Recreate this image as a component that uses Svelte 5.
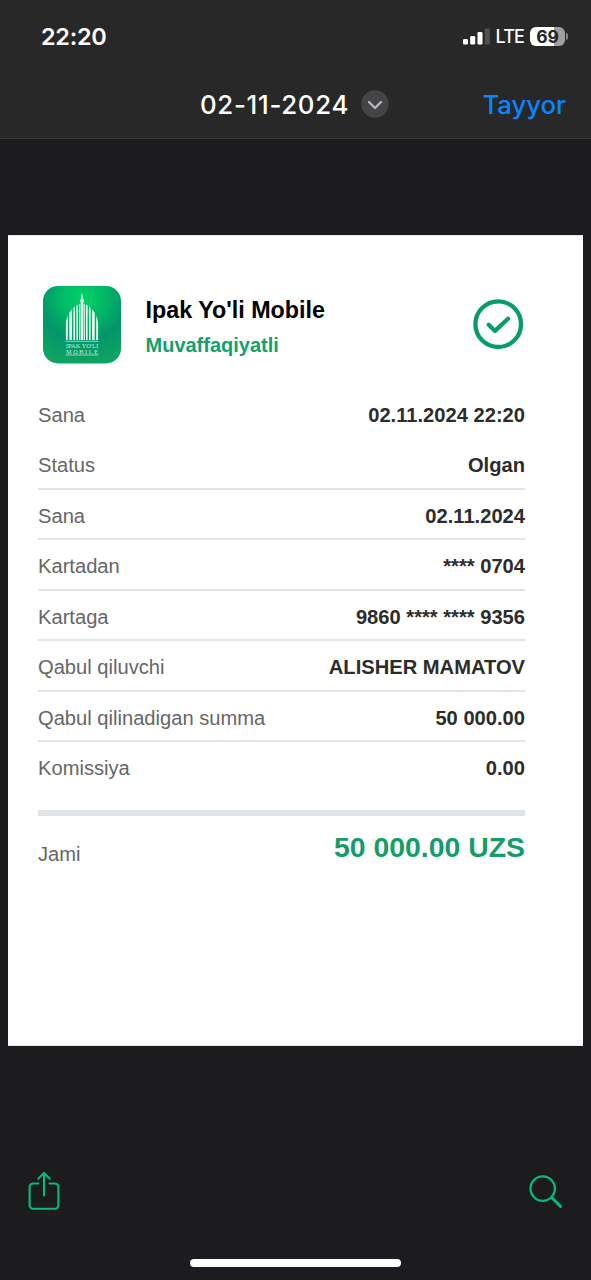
<script>
  const rows = [
    ['Sana', '02.11.2024 22:20', false],
    ['Status', 'Olgan', true],
    ['Sana', '02.11.2024', true],
    ['Kartadan', '**** 0704', true],
    ['Kartaga', '9860 **** **** 9356', true],
    ['Qabul qiluvchi', 'ALISHER MAMATOV', true],
    ['Qabul qilinadigan summa', '50 000.00', true],
    ['Komissiya', '0.00', false]
  ];
  const columns = [
    [66.8, 319, 2], [70.6, 311, 2.6], [74.2, 307, 1.6], [77.2, 305, 1.6], [79.8, 304, 1.2],
    [84.2, 304, 1.2], [86.8, 305, 1.6], [89.8, 307, 1.6], [93.4, 311, 2.6], [97.2, 319, 2]
  ];
</script>

<div class="screen">
  <header>
    <div class="status">
      <span class="time">22:20</span>
      <div class="signals">
        <svg class="bars" width="27" height="18" viewBox="0 0 27 18">
          <rect x="0" y="12" width="5" height="5.5" rx="1.3" fill="#fff" />
          <rect x="7.2" y="9" width="5" height="8.500" rx="1.3" fill="#fff" />
          <rect x="14.5" y="5" width="5" height="12.500" rx="1.3" fill="#fff" />
          <rect x="21.8" y="1.500" width="5" height="16" rx="1.3" fill="#505052" />
        </svg>
        <span class="lte">LTE</span>
        <div class="battery"><span>69</span></div>
        <i class="cap"></i>
      </div>
    </div>
    <div class="titlebar">
      <span class="title">02-11-2024</span>
      <svg class="chev" width="28" height="28" viewBox="0 0 28 28">
        <circle cx="14" cy="14" r="13.7" fill="#454549" />
        <path d="M8 12l6 6 6-6" fill="none" stroke="#b9b9bd" stroke-width="2.3" stroke-linecap="round" stroke-linejoin="round" />
      </svg>
      <span class="done">Tayyor</span>
    </div>
  </header>

  <main>
    <div class="brand">
      <svg class="logo" width="78" height="78" viewBox="43 286 78 78">
        <defs>
          <radialGradient id="glow" gradientUnits="userSpaceOnUse" cx="83" cy="298" r="64">
            <stop offset="0" stop-color="#00d166" />
            <stop offset="0.3" stop-color="#02bd66" />
            <stop offset="0.67" stop-color="#03966b" />
            <stop offset="1" stop-color="#0ea263" />
          </radialGradient>
          <clipPath id="dome">
            <path d="M65.600 340V327c0-11 5.400-19 13.200-22.700L82 302.500l3.200 1.800C93 308 98.400 316 98.400 327v13z" />
          </clipPath>
        </defs>
        <rect x="43" y="286" width="78" height="77.5" rx="15" fill="url(#glow)" />
        <path d="M81.7 293.500h.6l.5 5.300 1.400 1.800-1.200 2.400v37h-2v-37l-1.200-2.400 1.400-1.800z" fill="#e9fff5" />
        <g clip-path="url(#dome)">
          {#each columns as [x, top, w]}
            <path d="M{x} 340V{top - 6}" stroke="#effff8" stroke-width={w} />
          {/each}
        </g>
        <path d="M65.500 341.300h33M65.500 355h33" stroke="#b9e9d2" stroke-width="0.8" />
        <text x="66" y="348" textLength="32" lengthAdjust="spacingAndGlyphs">IPAK YO'LI</text>
        <text x="66" y="353.8" textLength="32">MOBILE</text>
      </svg>
      <div class="names">
        <h1>Ipak Yo'li Mobile</h1>
        <p>Muvaffaqiyatli</p>
      </div>
      <svg class="check" width="52" height="52" viewBox="0 0 52 52" fill="none" stroke="#079d6b">
        <circle cx="26.2" cy="26.2" r="22.800" stroke-width="4.300" />
        <path d="M16.7 26.8l6.3 6.1L36 20.7" stroke-width="4.200" stroke-linecap="round" stroke-linejoin="round" />
      </svg>
    </div>

    <div class="rows">
      {#each rows as [label, value, ruled]}
        <div class="row" class:ruled>
          <span>{label}</span><b>{value}</b>
        </div>
      {/each}
    </div>
    <div class="total">
      <span>Jami</span><b>50 000.00 UZS</b>
    </div>
  </main>

  <footer>
    <div class="tools">
      <svg width="32" height="40" viewBox="0 0 32 40" fill="none" stroke="#0bb978" stroke-width="2.1" stroke-linecap="round" stroke-linejoin="round">
        <path d="M10.5 12.5H5.2a3.6 3.6 0 0 0-3.6 3.6v18a3.6 3.6 0 0 0 3.6 3.6h21.6a3.6 3.6 0 0 0 3.6-3.6v-18a3.6 3.6 0 0 0-3.6-3.6H21.500M16 24.500V2M10.200 7.700L16 1.900l5.800 5.800" />
      </svg>
      <svg class="search" width="34" height="34" viewBox="0 0 34 34" fill="none" stroke="#0bb978" stroke-linecap="round">
        <circle cx="13.700" cy="13.600" r="12.200" stroke-width="2.300" />
        <path d="M22.600 22.500L31.500 31.400" stroke-width="3" />
      </svg>
    </div>
    <div class="home"></div>
  </footer>
</div>

<style>
  :global(body) { background: #1c1c1e; }
  .screen {
    box-sizing: border-box; width: 591px; height: 1280px; overflow: hidden;
    display: flex; flex-direction: column; background: #1c1c1e;
    font-family: "Liberation Sans", Arial, sans-serif;
  }
  header {
    box-sizing: border-box; height: 139px; flex: none; background: #282828;
    border-bottom: 1px solid #38383a; font-family: Inter, sans-serif; color: #fff;
  }
  .status { height: 72px; display: flex; justify-content: space-between; align-items: center; padding: 0 23px 0 41px; }
  .time { font-size: 23.5px; font-weight: 600; letter-spacing: -0.3px; }
  .signals { display: flex; align-items: center; }
  .lte { font-size: 18px; font-weight: 500; margin-left: 6px; letter-spacing: -0.9px; line-height: 20px; padding-top: 1px; }
  .battery {
    width: 35px; height: 19px; margin-left: 6px; border-radius: 6px; text-align: center;
    background: linear-gradient(90deg, #fff 69%, #a0a0a0 69%); color: #262626;
    font-size: 17.500px; font-weight: 700; line-height: 19px;
  }
  .cap { width: 2px; height: 7px; margin-left: 1px; background: #858587; border-radius: 0 3px 3px 0; }
  .titlebar { height: 64px; display: flex; align-items: center; padding: 0 25px 0 200px; }
  .title { font-size: 25.800px; font-weight: 500; letter-spacing: 0.700px; white-space: nowrap; width: 161px; }
  .chev { flex: none; }
  .done { margin-left: auto; color: #0a84ff; font-size: 25.700px; font-weight: 500; }
  main {
    box-sizing: border-box; width: 575px; height: 811px; flex: none; margin: 96px 8px 0;
    padding: 50px 58px 0 30px; background: #fff; border: solid #e9e9e9; border-width: 1px 0;
  }
  .brand { display: flex; height: 78px; padding-left: 5px; }
  .logo { flex: none; }
  .logo text { font-family: "Liberation Serif", serif; font-size: 6.2px; fill: #c5f0dc; }
  .names { margin-left: 24.500px; flex: 1; }
  h1 { margin: 9px 0 0; font-size: 23.300px; line-height: 30px; color: #000; white-space: nowrap; }
  p { margin: 6px 0 0; font-size: 20px; line-height: 28px; font-weight: 700; color: #14a06d; }
  .check { margin: 12px 1px 0 0; }
  .rows { margin-top: 24.500px; }
  .row {
    box-sizing: border-box; height: 50.500px; display: flex; justify-content: space-between;
    align-items: center; padding-top: 5px; font-size: 20.150px; border-bottom: 2px solid transparent;
  }
  .ruled { border-color: #dfe4e7; }
  .row span, .total span { color: #666; }
  .row b { color: #2c2c2c; }
  .total {
    display: flex; justify-content: space-between; margin-top: 17px;
    border-top: 6px solid #dee4e8; padding-top: 12px; font-size: 20.150px;
  }
  .total span { padding-top: 15px; }
  .total b { color: #149c69; font-size: 28.400px; line-height: 38px; }
  footer { flex: 1; display: flex; flex-direction: column; justify-content: flex-end; align-items: center; padding-bottom: 13px; }
  .tools { box-sizing: border-box; width: 100%; display: flex; justify-content: space-between; align-items: center; padding: 0 28px; margin-bottom: 48px; }
  .search { margin-top: 2px; }
  .home { width: 211px; height: 8px; border-radius: 4px; background: #fff; }
</style>
